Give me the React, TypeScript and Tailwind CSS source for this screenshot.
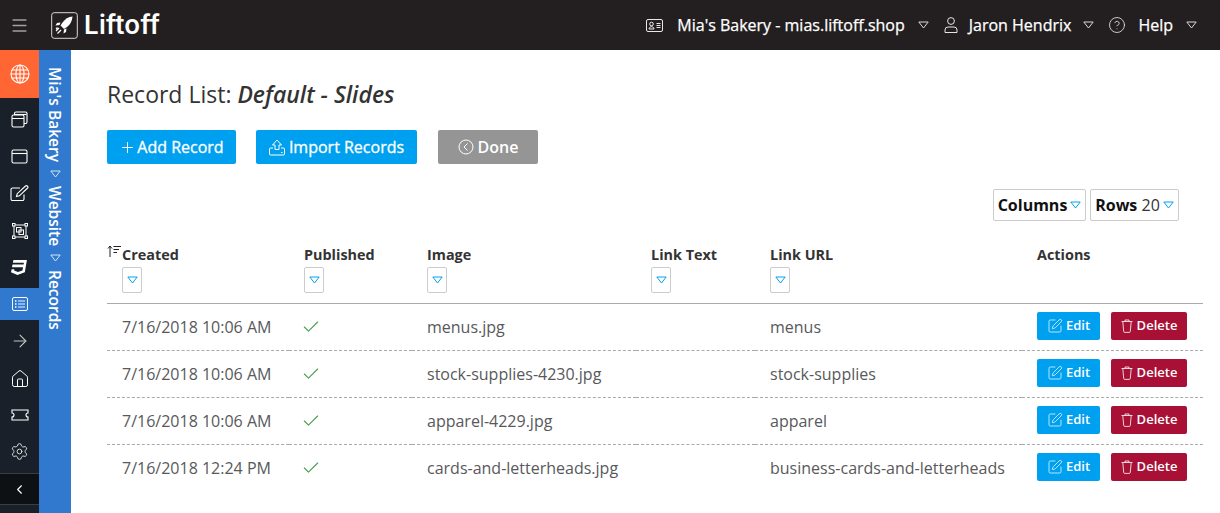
import {
  ArrowRight,
  ChevronLeft,
  CircleHelp,
  Check,
  Home,
  Menu,
  Plus,
  Settings,
  SquarePen,
} from "lucide-react";
import { FaCss3 } from "react-icons/fa";

const ROWS = [
  { created: "7/16/2018 10:06 AM", image: "menus.jpg", url: "menus" },
  { created: "7/16/2018 10:06 AM", image: "stock-supplies-4230.jpg", url: "stock-supplies" },
  { created: "7/16/2018 10:06 AM", image: "apparel-4229.jpg", url: "apparel" },
  { created: "7/16/2018 12:24 PM", image: "cards-and-letterheads.jpg", url: "business-cards-and-letterheads" },
];

const Caret = ({ className = "" }: { className?: string }) => (
  <svg width="11" height="8" viewBox="0 0 11 8" fill="none" stroke="currentColor" strokeWidth="1" className={`shrink-0 ${className}`}>
    <path d="M.8 1h9.400L5.500 7z" />
  </svg>
);

const GlobeIcon = () => (
  <svg width="20" height="20" viewBox="0 0 20 20" fill="none" stroke="white" strokeWidth="1.100">
    <circle cx="10" cy="10" r="9" />
    <ellipse cx="10" cy="10" rx="4" ry="9" />
    <path d="M10 1v18M2 6h16M2 14h16M1 10h18" />
  </svg>
);

const RowsIcon = () => (
  <svg width="18" height="16" viewBox="0 0 18 16" fill="none" stroke="white" strokeWidth="1">
    <rect x="1.500" y="1.500" width="15" height="13" rx="1.500" />
    <path d="M4 5h1.500M4 8h1.500M4 11h1.500" strokeWidth="1.600" />
    <path d="M7 5h7M7 8h7M7 11h7" stroke="#a9cdf2" strokeWidth="1.600" />
  </svg>
);

const PagesIcon = () => (
  <svg width="17" height="17" viewBox="0 0 17 17" fill="none" stroke="white" strokeWidth="1.100">
    <rect x="1" y="4" width="12" height="12" rx="1.500" />
    <path d="M1 7.500h12M3.500 4V2.500A1.500 1.500 0 0 1 5 1h9.500A1.500 1.500 0 0 1 16 2.500V11a1.500 1.500 0 0 1-1.500 1.500H13" />
    <path d="M3.500 3.500h12" />
  </svg>
);

const WindowIcon = () => (
  <svg width="17" height="15" viewBox="0 0 17 15" fill="none" stroke="white" strokeWidth="1.100">
    <rect x="1" y="1" width="15" height="13" rx="1.500" />
    <path d="M1 4.500h15" />
  </svg>
);

const EditIcon = () => (
  <svg width="19" height="17" viewBox="0 0 19 17" fill="none" stroke="white" strokeWidth="1.100">
    <path d="M14 9.500V14a1.500 1.500 0 0 1-1.500 1.500h-10A1.500 1.500 0 0 1 1 14V4.500A1.500 1.500 0 0 1 2.500 3H10" />
    <path d="M6.500 11.500l.7-2.800L15.500 1c.6-.5 1.300-.5 1.800 0l.3.300c.5.500.5 1.200 0 1.700l-8.200 7.800z" />
  </svg>
);

const ObjectIcon = () => (
  <svg width="16" height="16" viewBox="0 0 16 16" fill="none" stroke="white" strokeWidth="1">
    <path d="M2 3v10M14 3v10M3 2h10M3 14h10" />
    <rect x="0.500" y="0.500" width="2.500" height="2.500" />
    <rect x="13" y="0.500" width="2.500" height="2.500" />
    <rect x="0.500" y="13" width="2.500" height="2.500" />
    <rect x="13" y="13" width="2.500" height="2.500" />
    <rect x="4.500" y="4.500" width="4.500" height="4.500" />
    <rect x="7" y="7" width="4.500" height="4.500" />
  </svg>
);

const TicketIcon = () => (
  <svg width="18" height="12" viewBox="0 0 18 12" fill="none" stroke="white" strokeWidth="1.100">
    <path d="M1 1h16v3a2 2 0 0 0 0 4v3H1V8a2 2 0 0 0 0-4z" />
  </svg>
);

const RocketLogo = () => (
  <svg width="27" height="27" viewBox="0 0 27 27" fill="none">
    <rect x="0.700" y="0.700" width="25.600" height="25.600" rx="2.500" stroke="#d9d9d9" strokeWidth="1" />
    <path d="M21.500 4.500c-4 .3-7.500 2.500-10 6l-2 3 3.500 3.500 3-2c3.200-2.500 5.300-6.200 5.500-10.500z" fill="white" />
    <path d="M9.500 10.500l-3.500.5-1.500 2.500 4-.5zM15.500 16.500l-.5 3.500-2.500 1.500.5-4z" fill="white" />
    <path d="M8 16l-3 3M10 18l-3.500 3.500M6.500 15.500l-1.500 1.500" stroke="white" strokeWidth="1.200" />
  </svg>
);

const IdCardIcon = () => (
  <svg width="17" height="13" viewBox="0 0 17 13" fill="none" stroke="white" strokeWidth="0.900" className="shrink-0">
    <rect x="0.500" y="0.500" width="16" height="12" rx="1.500" />
    <circle cx="5.500" cy="5" r="1.800" />
    <path d="M3 10c0-3 5-3 5 0zM10.500 4.500h4M10.500 6.500h4M10.500 8.500h4" />
  </svg>
);

const UserIcon = () => (
  <svg width="14" height="16" viewBox="0 0 14 16" fill="none" stroke="#e4e4e4" strokeWidth="1" className="shrink-0">
    <circle cx="7" cy="4" r="3.400" />
    <path d="M1 15.500h12v-2.500a3 3 0 0 0-3-3H4a3 3 0 0 0-3 3z" />
  </svg>
);

const ImportIcon = () => (
  <svg width="16" height="17" viewBox="0 0 16 17" fill="none" stroke="white" strokeWidth="1">
    <path d="M8 1L3.500 6H6v4.500h4V6h2.500z" />
    <path d="M4 9H1.500A1 1 0 0 0 .5 10v5a1 1 0 0 0 1 1h13a1 1 0 0 0 1-1v-5a1 1 0 0 0-1-1H12" />
    <path d="M12 13.500h1.500" />
  </svg>
);

const TrashIcon = () => (
  <svg width="12" height="14" viewBox="0 0 12 14" fill="none" stroke="white" strokeOpacity="0.800" strokeWidth="1">
    <path d="M.5 2.500h11M1.800 2.500l.9 10a1 1 0 0 0 1 .9h4.600a1 1 0 0 0 1-.9l.9-10M4 2.500V1h4v1.500" />
  </svg>
);

const SortIcon = () => (
  <svg width="14" height="13" viewBox="0 0 14 13" fill="none" stroke="#231f20" strokeWidth="1" className="shrink-0">
    <path d="M3 12V1M1 3.500L3 1l2 2.500M6.500 1.500H14M6.500 4.500H12M6.500 7.500H10" />
  </svg>
);

const FilterButton = () => (
  <button className="flex h-[26px] w-[20px] items-center justify-center rounded-[2px] border border-[#ccc] bg-white text-[#00a0f0]">
    <Caret />
  </button>
);

const navIcons = [
  <PagesIcon key="pages" />,
  <WindowIcon key="window" />,
  <EditIcon key="edit" />,
  <ObjectIcon key="object" />,
  <FaCss3 key="css" className="text-[17px] text-white" />,
];

const App = () => {
  return (
    <div className="flex h-[513px] w-[1220px] flex-col overflow-hidden bg-white font-['Open_Sans',sans-serif] text-[#58595b]">
      <header className="flex h-[50px] shrink-0 items-center bg-[#231f20] text-white">
        <div className="flex w-[39px] justify-center">
          <Menu className="size-[19px] text-[#a0a0a0]" strokeWidth={2} />
        </div>
        <div className="ml-[12px] flex items-center gap-[6px]">
          <RocketLogo />
          <span className="font-['Inter',sans-serif] text-[26px] leading-none font-semibold tracking-[0.2px]">Liftoff</span>
        </div>
        <div className="ml-auto flex items-center pr-[23px] text-[16px] [-webkit-text-stroke:0.25px_white]">
          <IdCardIcon />
          <span className="ml-[14px]">Mia's Bakery - mias.liftoff.shop</span>
          <Caret className="ml-[13px] text-[#d8d8d8]" />
          <div className="ml-[15px]">
            <UserIcon />
          </div>
          <span className="ml-[11px]">Jaron Hendrix</span>
          <Caret className="ml-[12px] text-[#d8d8d8]" />
          <CircleHelp className="ml-[14px] size-[18px] text-[#e8e8e8]" strokeWidth={1.100} />
          <span className="ml-[12px]">Help</span>
          <Caret className="ml-[13px] text-[#d8d8d8]" />
        </div>
      </header>

      <div className="flex min-h-0 flex-1">
        <nav className="flex w-[39px] shrink-0 flex-col bg-[#1a2029]">
          <div className="flex h-[48px] shrink-0 items-center justify-center bg-[#ff6633]">
            <GlobeIcon />
          </div>
          <div className="h-[3px] shrink-0" />
          {navIcons.map((icon, i) => (
            <div key={i} className="flex h-[37px] shrink-0 items-center justify-center">
              {icon}
            </div>
          ))}
          <div className="h-[2px] shrink-0" />
          <div className="flex h-[32px] shrink-0 items-center justify-center bg-[#3079cf]">
            <RowsIcon />
          </div>
          <div className="flex h-[41px] shrink-0 items-center justify-center">
            <ArrowRight className="size-[20px] text-[#c4c4c4]" strokeWidth={1.300} />
          </div>
          <div className="flex h-[35px] shrink-0 items-center justify-center">
            <Home className="size-[20px] text-white" strokeWidth={1.200} />
          </div>
          <div className="flex h-[37px] shrink-0 items-center justify-center">
            <TicketIcon />
          </div>
          <div className="flex h-[37px] shrink-0 items-center justify-center">
            <Settings className="size-[19px] text-[#e0e0e0]" strokeWidth={1.200} />
          </div>
          <div className="mt-[3px] flex h-[32px] shrink-0 items-center justify-center border-y border-[#3a3d42] bg-[#0e1114]">
            <ChevronLeft className="size-[15px] text-white" strokeWidth={1.800} />
          </div>
        </nav>

        <aside className="w-[32px] shrink-0 bg-[#3079cf]">
          <div className="flex items-center gap-[8px] pt-[17px] pl-[6px] text-[15.500px] leading-[20px] font-semibold text-white [writing-mode:vertical-rl]">
            <span>Mia's Bakery</span>
            <Caret className="text-[#d5e4f6]" />
            <span>Website</span>
            <Caret className="text-[#d5e4f6]" />
            <span>Records</span>
          </div>
        </aside>

        <main className="min-w-0 flex-1 pt-[26px] pr-[17px] pl-[36px]">
          <h1 className="text-[23px] leading-[36px] text-[#333]">
            Record List: <em className="font-semibold">Default - Slides</em>
          </h1>

          <div className="mt-[18px] flex">
            <button className="flex h-[34px] w-[129px] items-center justify-center gap-[1px] rounded-[2px] bg-[#00a0f0] text-[16px] text-white [-webkit-text-stroke:0.3px_white]">
              <Plus className="size-[17px]" strokeWidth={1.400} />
              Add Record
            </button>
            <button className="ml-[20px] flex h-[34px] w-[161px] items-center justify-center gap-[4px] rounded-[2px] bg-[#00a0f0] text-[16px] text-white [-webkit-text-stroke:0.3px_white]">
              <ImportIcon />
              Import Records
            </button>
            <button className="ml-[21px] flex h-[34px] w-[100px] items-center justify-center gap-[4px] rounded-[2px] bg-[#959595] text-[16px] font-semibold text-white">
              <svg width="16" height="16" viewBox="0 0 16 16" fill="none" stroke="white" strokeWidth="1">
                <circle cx="8" cy="8" r="7" />
                <path d="M9.500 4.500L6 8l3.500 3.500" />
              </svg>
              Done
            </button>
          </div>

          <div className="mt-[25px] mr-[24px] flex justify-end gap-[4px]">
            <button className="flex h-[32px] w-[93px] items-center justify-center gap-[3px] rounded-[2px] border border-[#ccc] text-[16px] font-bold text-[#111]">
              Columns <Caret className="text-[#00a0f0]" />
            </button>
            <button className="flex h-[32px] w-[89px] items-center justify-center gap-[3px] rounded-[2px] border border-[#ccc] text-[16px] text-[#333]">
              <span>
                <b className="text-[#111]">Rows</b> 20
              </span>
              <Caret className="text-[#00a0f0]" />
            </button>
          </div>

          <table className="mt-[22px] w-[1096px] table-fixed border-collapse text-[16px]">
            <colgroup>
              <col className="w-[182px]" />
              <col className="w-[123px]" />
              <col className="w-[224px]" />
              <col className="w-[119px]" />
              <col className="w-[267px]" />
              <col />
            </colgroup>
            <thead>
              <tr className="h-[60px] border-b border-[#aaa] align-top text-[14.400px] font-bold text-[#333]">
                {["Created", "Published", "Image", "Link Text", "Link URL"].map((h, i) => (
                  <th key={h} className="p-0 text-left font-bold">
                    <div className={`flex pt-[2px] ${i === 0 ? "" : "pl-[15px]"}`}>
                      {i === 0 && <SortIcon />}
                      <div className={i === 0 ? "ml-px" : ""}>
                        <div className="leading-[19px]">{h}</div>
                        <div className="mt-[3px]">
                          <FilterButton />
                        </div>
                      </div>
                    </div>
                  </th>
                ))}
                <th className="p-0 pt-[2px] pl-[15px] text-left leading-[19px] font-bold">Actions</th>
              </tr>
            </thead>
            <tbody>
              {ROWS.map((r, i) => (
                <tr key={i} className={`h-[47px] ${i < 3 ? "border-b border-dashed border-[#aaa]" : ""}`}>
                  <td className="p-0 pl-[15px]">{r.created}</td>
                  <td className="p-0 pl-[12px]">
                    <Check className="size-[20px] text-[#4a9d4f]" strokeWidth={1.300} />
                  </td>
                  <td className="p-0 pl-[15px]">{r.image}</td>
                  <td className="p-0" />
                  <td className="p-0 pl-[15px]">{r.url}</td>
                  <td className="p-0 pl-[15px]">
                    <div className="mb-[2px] flex gap-[11px]">
                      <button className="flex h-[28px] w-[63px] items-center justify-center gap-[3px] rounded-[2px] bg-[#00a0f0] text-[13px] font-semibold text-white">
                        <SquarePen className="size-[16px] text-white/90" strokeWidth={1.200} />
                        Edit
                      </button>
                      <button className="flex h-[28px] w-[76px] items-center justify-center gap-[4px] rounded-[2px] bg-[#a81035] text-[13px] font-semibold text-white">
                        <TrashIcon />
                        Delete
                      </button>
                    </div>
                  </td>
                </tr>
              ))}
            </tbody>
          </table>
        </main>
      </div>
    </div>
  );
};

export default App;
